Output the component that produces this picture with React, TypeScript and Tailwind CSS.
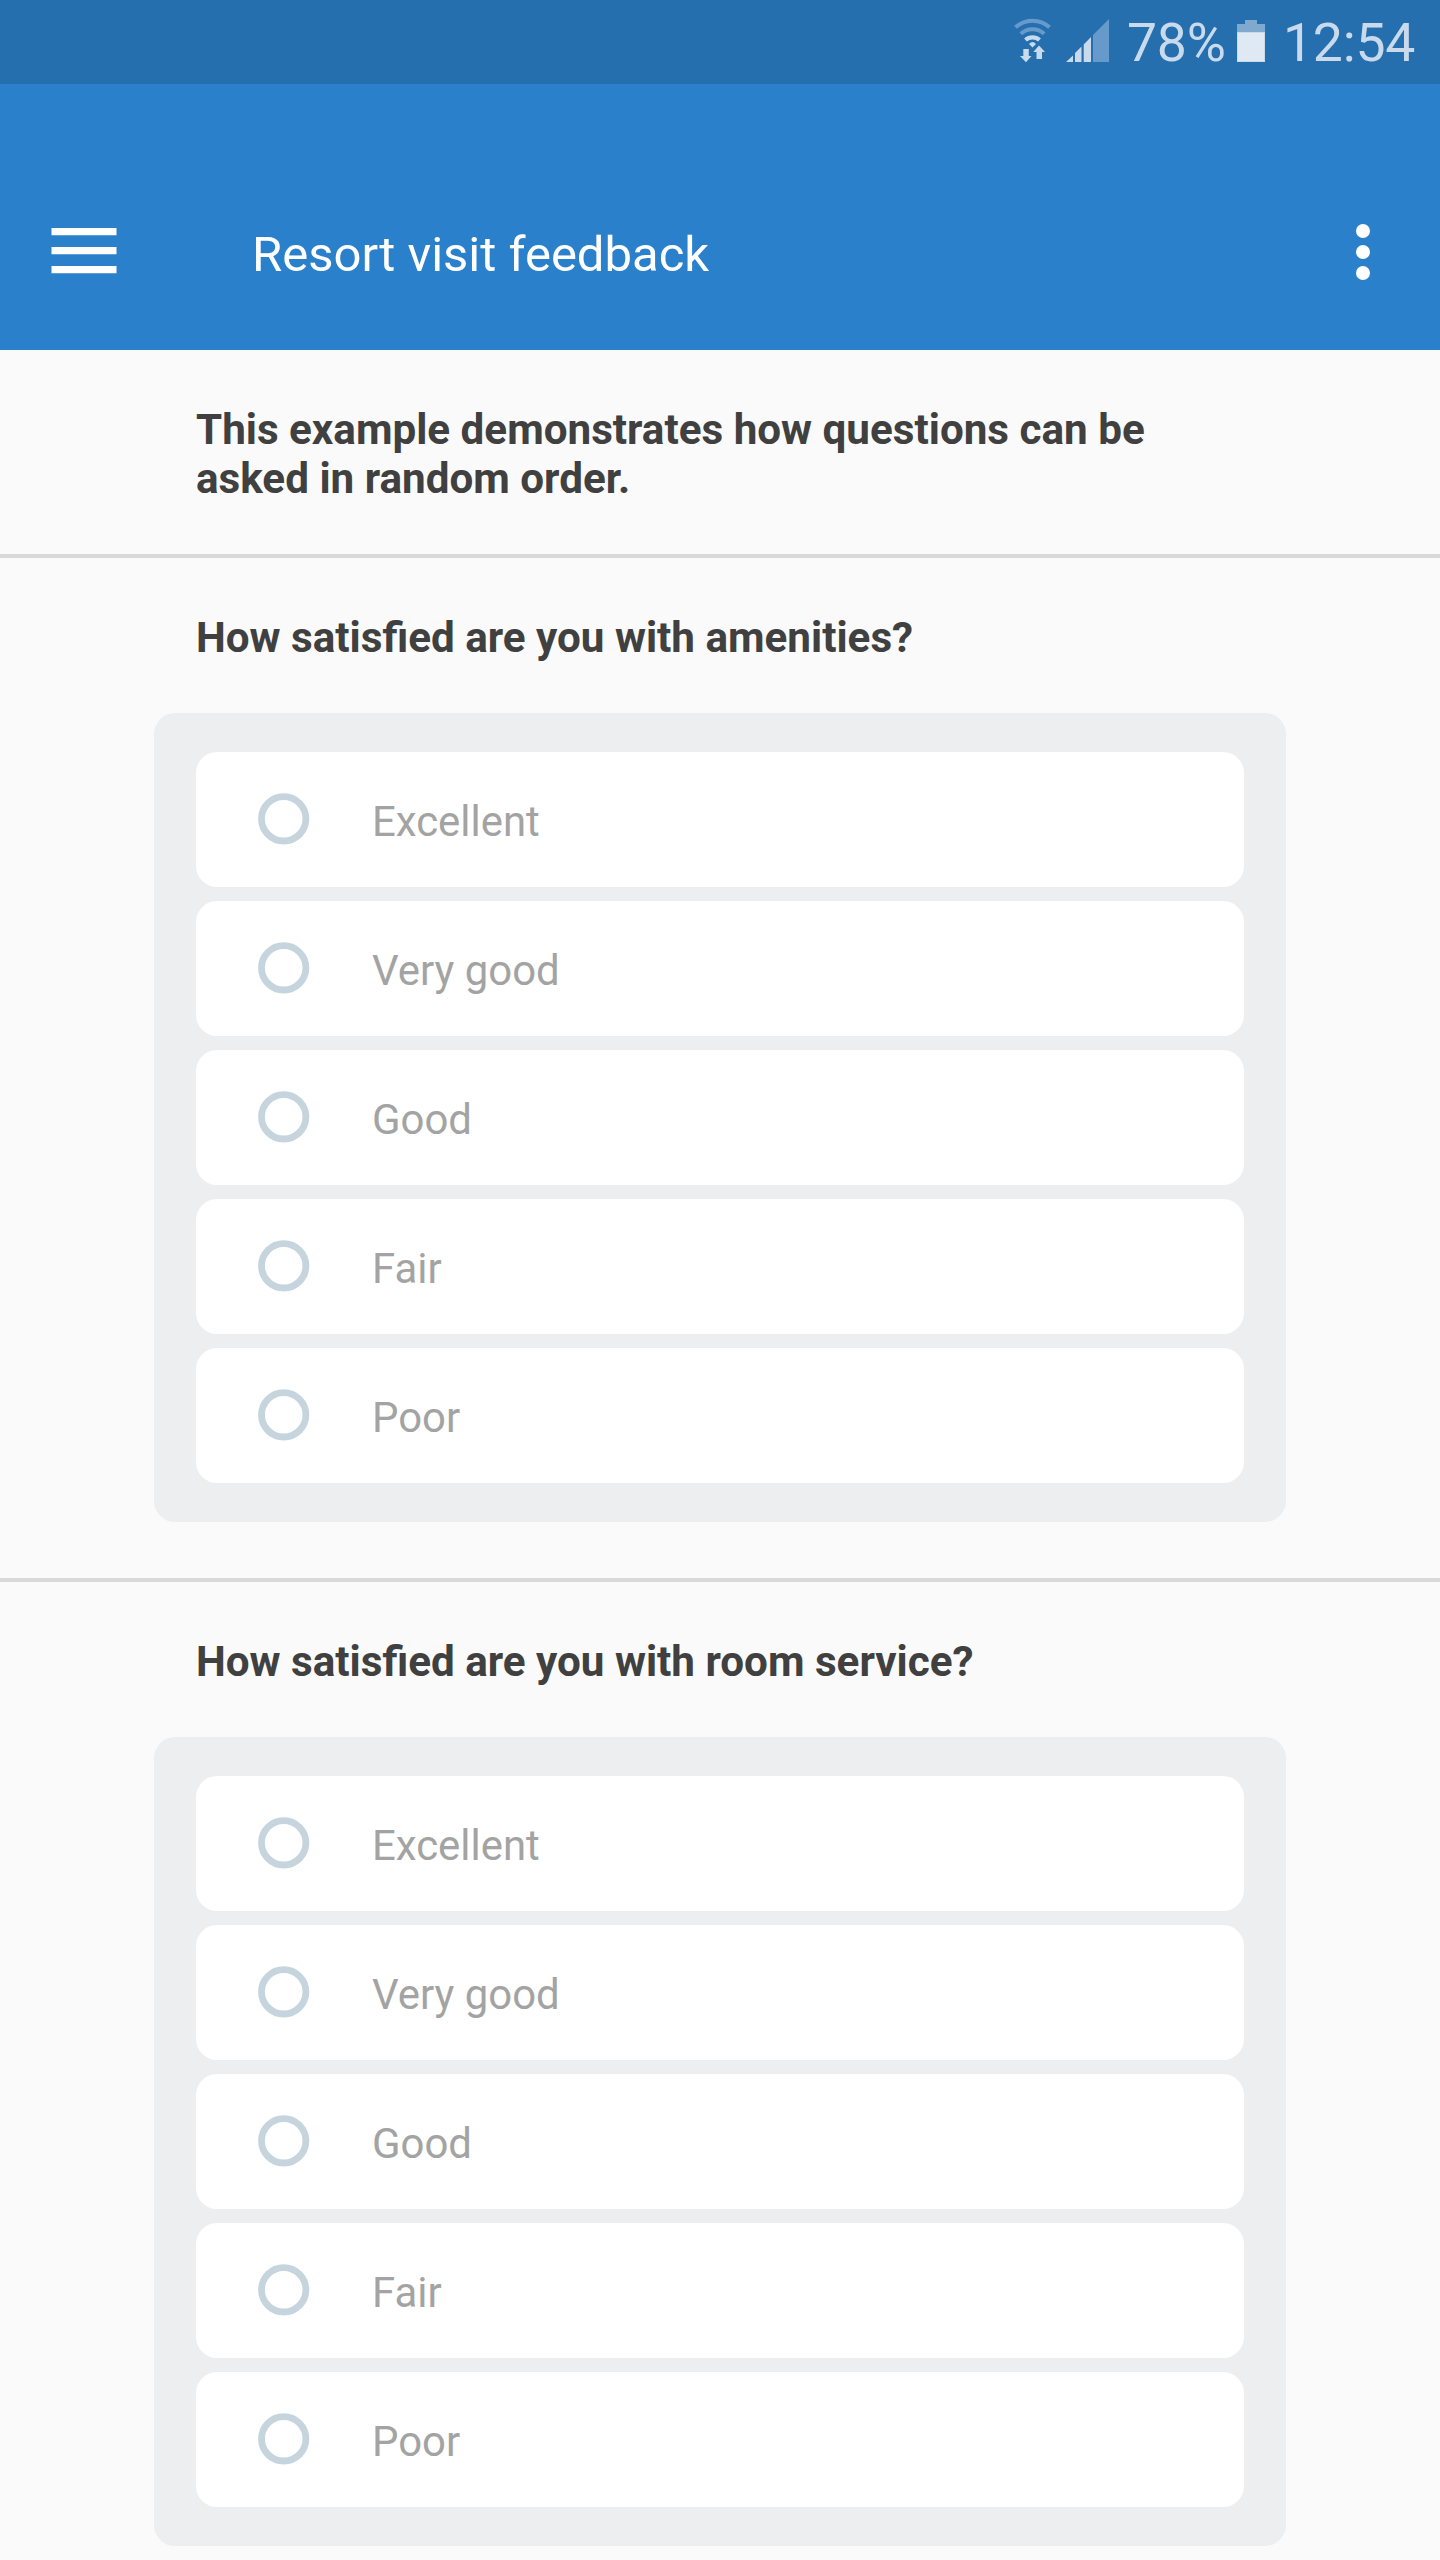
const OPTIONS = ["Excellent", "Very good", "Good", "Fair", "Poor"];

function WifiIcon() {
  return (
    <svg width="38" height="46" viewBox="0 0 38 46" fill="none" className="mt-[18px] shrink-0">
      <g stroke="#669aca" strokeWidth="4">
        <path d="M1.5 9.3 A25 25 0 0 1 35.5 9.3" />
        <path d="M6.8 15.8 A17 17 0 0 1 30.2 15.8" />
      </g>
      <path d="M11.500 22 A10.500 10.500 0 0 1 25.500 22" stroke="#c8daeb" strokeWidth="4.2" />
      <path d="M15 26 Q18.500 22 22 26 L18.500 29.500 Z" fill="#c8daeb" />
      <path d="M9.300 31 H14.800 V38 H17.500 L12 44.300 L6 38 H9.300 Z" fill="#c8daeb" />
      <path d="M25 27.500 L31 34 H28 V41 H22.500 V34 H19.300 Z" fill="#c8daeb" />
    </svg>
  );
}

function SignalIcon() {
  return (
    <svg width="44" height="44" viewBox="0 0 44 44" className="mt-[18px] ml-3.5 shrink-0">
      <path d="M27 17 L43 1 V44 H27 Z" fill="#669aca" />
      <path d="M0 44 L7 37.500 V44 Z M9 35 L15.500 28.500 V44 H9 Z M17.700 26.500 L25 19 V44 H17.700 Z" fill="#c8daeb" />
    </svg>
  );
}

function BatteryIcon() {
  return (
    <svg width="28" height="42" viewBox="0 0 28 42" className="mt-5 shrink-0">
      <path d="M8 0 H20 V4 H28 V13 H0 V4 H8 Z" fill="#7fa9cf" />
      <path d="M0 12 H28 V42 H0 Z" fill="#c8daeb" />
      <path d="M1 13 H27 V41 H1 Z" fill="#dfe9f3" />
    </svg>
  );
}

function StatusBar() {
  return (
    <div className="flex h-[84px] items-start bg-[#256fae] pl-[1014px] text-[53.5px] leading-[64px] tracking-[-0.2px] text-[#c8daeb]">
      <WifiIcon />
      <SignalIcon />
      <span className="mt-[11px] ml-[17px] w-[110px] shrink-0 whitespace-nowrap">78%</span>
      <BatteryIcon />
      <span className="mt-[11px] ml-[18px] whitespace-nowrap">12:54</span>
    </div>
  );
}

function Header() {
  return (
    <header className="flex h-[266px] items-start bg-[#2a80cb] pl-[51px] text-white">
      <button aria-label="Menu" className="mt-[143px]">
        <svg width="66" height="48" viewBox="0 0 66 48" fill="currentColor">
          <path d="M0.500 1 H65.500 V8.300 H0.500 Z M0.500 20 H65.500 V27.300 H0.500 Z M0.500 39 H65.500 V46.300 H0.500 Z" />
        </svg>
      </button>
      <h1 className="mt-[142px] ml-[135px] flex-1 text-[49px] leading-[58px]">Resort visit feedback</h1>
      <button aria-label="More options" className="mt-[140px] mr-[70px] flex flex-col gap-[7px]">
        <span className="size-3.5 rounded-full bg-white" />
        <span className="size-3.5 rounded-full bg-white" />
        <span className="size-3.5 rounded-full bg-white" />
      </button>
    </header>
  );
}

function Question({ title }: { title: string }) {
  return (
    <section className="h-[1024px] border-t-4 border-[#d9d9d9] px-[154px] pt-[55px]">
      <h2 className="px-[42px] text-[42.2px] leading-[49px] font-bold text-[#404040]">{title}</h2>
      <div className="mt-[51px] flex flex-col gap-3.5 rounded-[21px] bg-[#edeef0] px-[42px] py-[39px]">
        {OPTIONS.map((option) => (
          <div key={option} className="flex h-[135px] items-start rounded-[21px] bg-white pl-[62px]">
            <svg width="52" height="52" viewBox="0 0 52 52" fill="none" className="mt-[41px] shrink-0">
              <circle cx="25.7" cy="25.8" r="22.2" stroke="#c6d5dd" strokeWidth="6.8" />
            </svg>
            <span className="mt-[45px] ml-[62px] text-[41.9px] leading-[49px] text-[#a3a3a3]">{option}</span>
          </div>
        ))}
      </div>
    </section>
  );
}

export default function App() {
  return (
    <div className="h-[2560px] w-[1440px] overflow-hidden bg-[#fafafa] font-[Roboto,sans-serif]">
      <StatusBar />
      <Header />
      <p className="h-[204px] px-[196px] pt-[55px] text-[42.2px] leading-[49px] font-bold text-[#404040]">
        This example demonstrates how questions can be
        <br />
        asked in random order.
      </p>
      <Question title="How satisfied are you with amenities?" />
      <Question title="How satisfied are you with room service?" />
    </div>
  );
}
